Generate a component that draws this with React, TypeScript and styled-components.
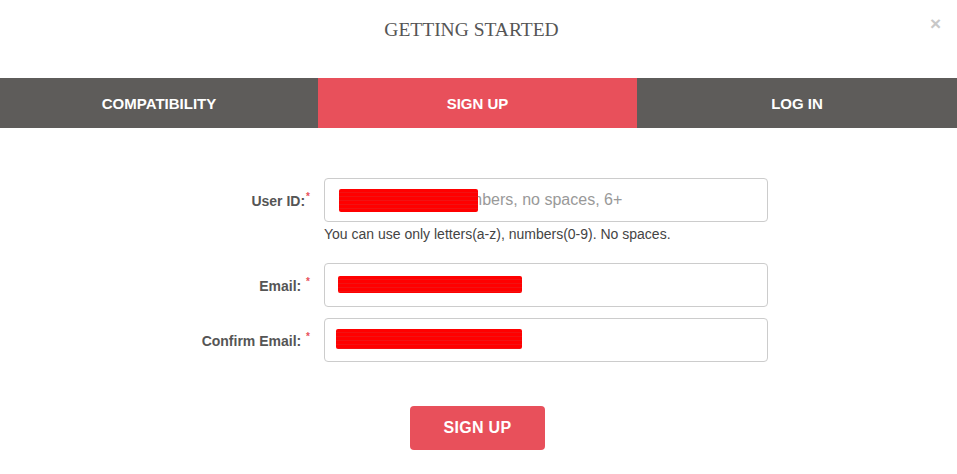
import styled, { createGlobalStyle } from 'styled-components'

const GlobalStyle = createGlobalStyle`
    html, body {
        margin: 0;
        padding: 0;
        background: #fff;
        font-family: "Liberation Sans", Arial, sans-serif;
    }
    * { box-sizing: border-box; }
`

const Modal = styled.div`
    width: 957px;
    height: 474px;
    background: #fff;
    display: flex;
    flex-direction: column;
    overflow: hidden;
`

// title bar with the close cross in the corner
const Header = styled.header`
    position: relative;
    height: 78px;
    display: flex;
    justify-content: center;
    padding: 19px 14px 0 0;
`

const Title = styled.h2`
    margin: 0;
    font-family: "Liberation Serif", "Times New Roman", serif;
    font-weight: normal;
    font-size: 19.5px;
    line-height: 22px;
    color: #555;
`

const Close = styled.span`
    position: absolute;
    top: 13px;
    right: 16px;
    font-size: 19px;
    font-weight: bold;
    color: #c8c8c8;
`

const Tabs = styled.nav`
    display: grid;
    grid-template-columns: 318px 319px 320px;
    height: 50px;
`

const Tab = styled.div<{ $active?: boolean }>`
    display: flex;
    align-items: center;
    justify-content: center;
    background: ${p => (p.$active ? '#e8505b' : '#5e5c5a')};
    color: #fff;
    font-weight: bold;
    font-size: 15px;
`

const Form = styled.form`
    display: flex;
    flex-direction: column;
    padding: 50px 0 0 0;
`

const Row = styled.div<{ $gap?: number }>`
    display: grid;
    grid-template-columns: 310px 444px;
    column-gap: 14px;
    align-items: center;
    margin-bottom: ${p => p.$gap ?? 0}px;
`

const Label = styled.label`
    justify-self: end;
    font-size: 14px;
    font-weight: bold;
    color: #555;
`

const Star = styled.sup`
    color: #e8505b;
    font-size: 10px;
    margin-left: 1px;
`

const Field = styled.div`
    position: relative;
    height: 44px;
    border: 1px solid #ccc;
    border-radius: 4px;
    display: flex;
    align-items: center;
    padding: 0 14px;
    font-size: 16px;
    color: #999;
`

// scribbled-out value in the screenshot
const Redaction = styled.span<{ $left: number; $top: number; $w: number; $h: number }>`
    position: absolute;
    left: ${p => p.$left}px;
    top: ${p => p.$top}px;
    width: ${p => p.$w}px;
    height: ${p => p.$h}px;
    background: repeating-linear-gradient(180deg, #ff0000 0 3px, #f21212 3px 4px);
    border-radius: 2px;
`

const Help = styled.div`
    grid-column: 2;
    font-size: 14px;
    line-height: 16px;
    color: #444;
    margin-top: 4px;
`

const Submit = styled.button`
    align-self: center;
    margin: 44px 0 0 0;
    transform: translateX(-1px);
    width: 135px;
    height: 44px;
    border: none;
    border-radius: 4px;
    background: #e8505b;
    color: #fff;
    font-family: "Liberation Sans", Arial, sans-serif;
    font-weight: bold;
    font-size: 16px;
    letter-spacing: 0.3px;
`

function App() {
    return (
        <>
            <GlobalStyle />
            <Modal>
                <Header>
                    <Title>GETTING STARTED</Title>
                    <Close>×</Close>
                </Header>
                <Tabs>
                    <Tab>COMPATIBILITY</Tab>
                    <Tab $active>SIGN UP</Tab>
                    <Tab>LOG IN</Tab>
                </Tabs>
                <Form onSubmit={e => e.preventDefault()}>
                    <Row $gap={21}>
                        <Label>User ID:<Star>*</Star></Label>
                        <Field>
                            Use letters and numbers, no spaces, 6+
                            <Redaction $left={14} $top={10} $w={139} $h={23} />
                        </Field>
                        <Help>You can use only letters(a-z), numbers(0-9). No spaces.</Help>
                    </Row>
                    <Row $gap={11}>
                        <Label>Email: <Star>*</Star></Label>
                        <Field>
                            <Redaction $left={13} $top={12} $w={184} $h={17} />
                        </Field>
                    </Row>
                    <Row>
                        <Label>Confirm Email: <Star>*</Star></Label>
                        <Field>
                            <Redaction $left={11} $top={10} $w={186} $h={20} />
                        </Field>
                    </Row>
                    <Submit type="submit">SIGN UP</Submit>
                </Form>
            </Modal>
        </>
    )
}

export default App
